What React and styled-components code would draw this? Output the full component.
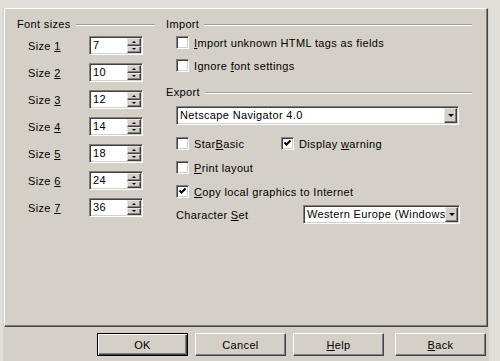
import React from "react";
import styled, { createGlobalStyle } from "styled-components";

const GlobalStyle = createGlobalStyle`
  html, body {
    margin: 0;
    padding: 0;
    background: #e0ded8;
  }
  body {
    font-family: "Liberation Sans", Arial, sans-serif;
    font-size: 11px;
    letter-spacing: 0.35px;
    color: #000;
  }
`;

const Window = styled.div`
  width: 500px;
  height: 361px;
  overflow: hidden;
  box-sizing: border-box;
  padding: 8px 0 0 3px;
  background: #e0ded8;
`;

const Dialog = styled.div`
  width: 486px;
  height: 353px;
  background: #d4d0c8;
  display: flex;
  flex-direction: column;
`;

const Page = styled.div`
  margin-left: 1px;
  width: 484px;
  height: 319px;
  box-sizing: border-box;
  border-top: 1px solid #fff;
  border-left: 1px solid #fff;
  border-right: 1px solid #404040;
  border-bottom: 1px solid #404040;
  box-shadow: inset -1px -1px 0 #808080;
  padding: 9px 15px 0 12px;
  display: flex;
  gap: 11px;
`;

const Column = styled.div`
  width: ${({ width }) => width}px;
  display: flex;
  flex-direction: column;
`;

const Heading = styled.div`
  display: flex;
  align-items: center;
  gap: 5px;
  height: 13px;
  line-height: 13px;
  margin-top: ${({ top }) => top || 0}px;
`;

const Rule = styled.div`
  flex: 1;
  border-top: 1px solid #a09c94;
  border-bottom: 1px solid #fff;
`;

const SizeList = styled.div`
  margin-top: 5px;
  padding-left: 11px;
  display: flex;
  flex-direction: column;
  gap: 8px;
`;

const SizeRow = styled.div`
  display: flex;
  align-items: center;
  height: 19px;
`;

const SizeLabel = styled.span`
  width: 61px;
`;

const Sunken = styled.div`
  box-sizing: border-box;
  height: 19px;
  width: ${({ width }) => width}px;
  flex-shrink: 0;
  background: #fff;
  border-top: 1px solid #808080;
  border-left: 1px solid #808080;
  border-bottom: 1px solid #fff;
  border-right: 1px solid #fff;
  box-shadow: inset 1px 1px 0 #404040, inset -1px -1px 0 #d4d0c8;
  padding: 1px;
  display: flex;
  align-items: stretch;
  margin-top: ${({ top }) => top || 0}px;
`;

const FieldText = styled.span`
  flex: 1;
  min-width: 0;
  padding-left: 2px;
  line-height: 15px;
  white-space: nowrap;
  overflow: hidden;
`;

const SpinColumn = styled.div`
  width: 14px;
  display: flex;
  flex-direction: column;
`;

const RaisedButton = styled.div`
  box-sizing: border-box;
  flex: ${({ width }) => (width ? `0 0 ${width}px` : "1")};
  background: #d4d0c8;
  border-top: 1px solid #e8e6e2;
  border-left: 1px solid #e8e6e2;
  border-right: 1px solid #404040;
  border-bottom: 1px solid #404040;
  box-shadow: inset -1px -1px 0 #808080;
  display: flex;
  align-items: center;
  justify-content: center;
`;

const Arrow = styled.span`
  width: 0;
  height: 0;
  border-left: ${({ size }) => size}px solid transparent;
  border-right: ${({ size }) => size}px solid transparent;
  ${({ up, size }) =>
    up
      ? `border-bottom: ${size}px solid #000;`
      : `border-top: ${size}px solid #000;`}
`;

const CheckRow = styled.label`
  display: flex;
  align-items: center;
  height: 13px;
  gap: 5px;
  white-space: nowrap;
  margin-top: ${({ top }) => top || 0}px;
`;

const Box = styled.span`
  box-sizing: border-box;
  width: 13px;
  height: 13px;
  flex-shrink: 0;
  background: #fff;
  border-top: 1px solid #808080;
  border-left: 1px solid #808080;
  border-bottom: 1px solid #fff;
  border-right: 1px solid #fff;
  box-shadow: inset 1px 1px 0 #404040, inset -1px -1px 0 #d4d0c8;
  display: flex;
  align-items: center;
  justify-content: center;
`;

const Indent = styled.div`
  padding-left: 10px;
  display: flex;
  flex-direction: column;
`;

const OptionGrid = styled.div`
  margin-top: 12px;
  display: grid;
  grid-template-columns: 105px auto;
  row-gap: 11px;
`;

const CharsetRow = styled.div`
  margin-top: 7px;
  display: flex;
  align-items: center;
`;

const CharsetLabel = styled.span`
  width: 127px;
`;

const ButtonBar = styled.div`
  margin-top: 6px;
  padding-left: 94px;
  display: flex;
  gap: 7px;
`;

const PushButton = styled.div`
  box-sizing: border-box;
  width: 91px;
  height: 23px;
  margin-left: ${({ gapLeft }) => gapLeft || 0}px;
  background: #d4d0c8;
  border: 1px solid ${({ primary }) => (primary ? "#000" : "#404040")};
  border-top-color: ${({ primary }) => (primary ? "#000" : "#fff")};
  border-left-color: ${({ primary }) => (primary ? "#000" : "#fff")};
  box-shadow: ${({ primary }) =>
    primary
      ? "inset 1px 1px 0 #fff, inset -1px -1px 0 #404040, inset -2px -2px 0 #808080"
      : "inset -1px -1px 0 #808080"};
  display: flex;
  align-items: center;
  justify-content: center;
`;

const U = styled.span`
  text-decoration: underline;
`;

const Check = () => (
  <svg width="9" height="9" viewBox="0 0 9 9">
    <path d="M1.5 3.5 L3.5 5.5 L7.5 1.5" stroke="#000" strokeWidth="2" fill="none" />
  </svg>
);

const CheckBox = ({ checked, children, top }) => (
  <CheckRow top={top}>
    <Box>{checked && <Check />}</Box>
    <span>{children}</span>
  </CheckRow>
);

const SpinField = ({ value }) => (
  <Sunken width={54}>
    <FieldText>{value}</FieldText>
    <SpinColumn>
      <RaisedButton>
        <Arrow up size={2} />
      </RaisedButton>
      <RaisedButton>
        <Arrow size={2} />
      </RaisedButton>
    </SpinColumn>
  </Sunken>
);

const Dropdown = ({ width, value, top }) => (
  <Sunken width={width} top={top}>
    <FieldText>{value}</FieldText>
    <RaisedButton width={13}>
      <Arrow size={3} />
    </RaisedButton>
  </Sunken>
);

const sizes = [7, 10, 12, 14, 18, 24, 36];

export default function App() {
  return (
    <>
      <GlobalStyle />
      <Window>
        <Dialog>
          <Page>
            <Column width={138}>
              <Heading>
                <span>Font sizes</span>
                <Rule />
              </Heading>
              <SizeList>
                {sizes.map((s, i) => (
                  <SizeRow key={s}>
                    <SizeLabel>
                      Size <U>{i + 1}</U>
                    </SizeLabel>
                    <SpinField value={s} />
                  </SizeRow>
                ))}
              </SizeList>
            </Column>
            <Column width={306}>
              <Heading>
                <span>Import</span>
                <Rule />
              </Heading>
              <Indent>
                <CheckBox top={5}>
                  <U>I</U>mport unknown HTML tags as fields
                </CheckBox>
                <CheckBox top={10}>
                  Ignore <U>f</U>ont settings
                </CheckBox>
              </Indent>
              <Heading top={14}>
                <span>Export</span>
                <Rule />
              </Heading>
              <Indent>
                <Dropdown width={283} top={7} value="Netscape Navigator 4.0" />
                <OptionGrid>
                  <CheckBox>
                    Star<U>B</U>asic
                  </CheckBox>
                  <CheckBox checked>
                    Display <U>w</U>arning
                  </CheckBox>
                  <CheckBox>
                    <U>P</U>rint layout
                  </CheckBox>
                  <span />
                  <CheckBox checked>
                    <U>C</U>opy local graphics to Internet
                  </CheckBox>
                </OptionGrid>
                <CharsetRow>
                  <CharsetLabel>
                    Character <U>S</U>et
                  </CharsetLabel>
                  <Dropdown width={157} value="Western Europe (Windows-1252)" />
                </CharsetRow>
              </Indent>
            </Column>
          </Page>
          <ButtonBar>
            <PushButton primary>OK</PushButton>
            <PushButton>Cancel</PushButton>
            <PushButton>
              <U>H</U>elp
            </PushButton>
            <PushButton gapLeft={4}>
              <U>B</U>ack
            </PushButton>
          </ButtonBar>
        </Dialog>
      </Window>
    </>
  );
}
